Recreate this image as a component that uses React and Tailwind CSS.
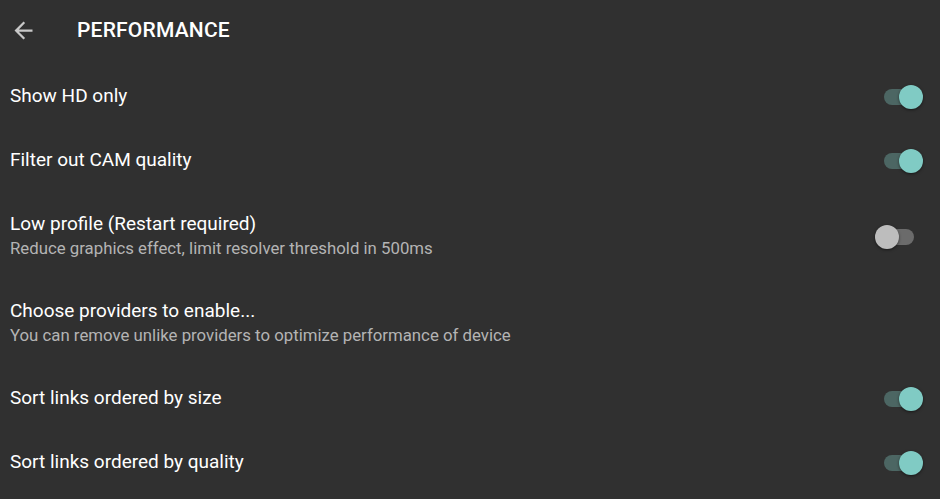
const settings = [
  { title: "Show HD only", on: true },
  { title: "Filter out CAM quality", on: true },
  { title: "Low profile (Restart required)", sub: "Reduce graphics effect, limit resolver threshold in 500ms", on: false },
  { title: "Choose providers to enable...", sub: "You can remove unlike providers to optimize performance of device" },
  { title: "Sort links ordered by size", on: true },
  { title: "Sort links ordered by quality", on: true },
];

const Switch = ({ on }) => (
  <div className="relative w-[48px] h-6 shrink-0">
    {on ? (
      <>
        <div className="absolute left-[9px] top-[4px] w-9 h-4 rounded-full bg-[#80cbc4]/35" />
        <div className="absolute right-0 top-0 w-6 h-6 rounded-full bg-[#80cbc4] shadow-[0_1px_3px_rgba(0,0,0,0.5)]" />
      </>
    ) : (
      <>
        <div className="absolute left-[5px] top-[4px] w-[34px] h-4 rounded-full bg-[#6b6b6b]" />
        <div className="absolute left-0 top-0 w-6 h-6 rounded-full bg-[#bdbdbd] shadow-[0_1px_3px_rgba(0,0,0,0.5)]" />
      </>
    )}
  </div>
);

export default function App() {
  return (
    <div className="w-[940px] h-[499px] overflow-hidden bg-[#303030] text-white font-['Roboto',sans-serif]">
      <div className="h-[65px] flex items-center">
        <svg width="27" height="27" viewBox="0 0 24 24" className="ml-[10px] -mt-[5px]" fill="#c8c8c8">
          <path d="M20 11H7.83l5.59-5.59L12 4l-8 8 8 8 1.41-1.41L7.83 13H20v-2z" />
        </svg>
        <h1 className="ml-[40px] -mt-[4px] text-[21px] font-medium tracking-[0.2px]">PERFORMANCE</h1>
      </div>
      {settings.map((s) => (
        <div key={s.title} className="flex items-center pl-[10px] pr-[17px] pt-[20px] pb-[20px]">
          <div className="flex-1 min-w-0">
            <div className="text-[19px] leading-[24px] -mt-[1px] mb-[1px]">{s.title}</div>
            {s.sub && <div className="text-[16.8px] leading-[23px] text-[#b4b4b4]">{s.sub}</div>}
          </div>
          {s.on !== undefined && <Switch on={s.on} />}
        </div>
      ))}
    </div>
  );
}
